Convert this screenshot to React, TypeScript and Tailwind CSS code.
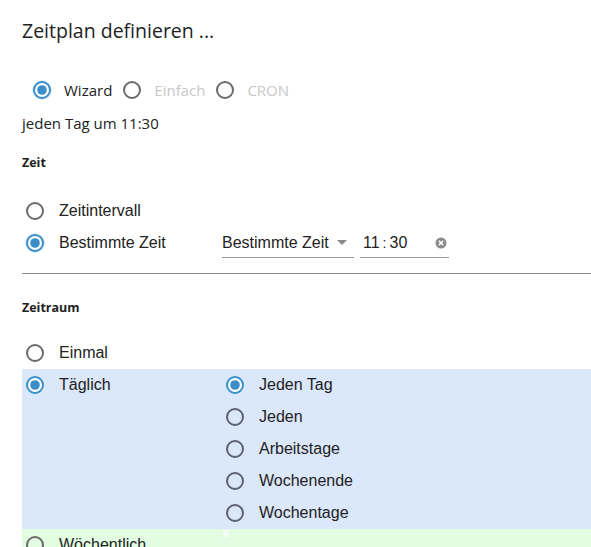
import React from "react";

function Radio({ checked, dark }: { checked?: boolean; dark?: boolean }) {
  if (checked) {
    return (
      <svg width="22" height="22" viewBox="0 0 22 22" className="shrink-0 -m-[2px]">
        <circle cx="11" cy="11" r="10" fill="#d6ecfa" />
        <circle cx="11" cy="11" r="8" fill="#ffffff" stroke="#3b8ec8" strokeWidth="2" />
        <circle cx="11" cy="11" r="4.8" fill="#3b8ec8" />
      </svg>
    );
  }
  return (
    <svg width="18" height="18" viewBox="0 0 18 18" className="shrink-0">
      <circle cx="9" cy="9" r="8" fill="none" stroke={dark ? "#5a6170" : "#6b6b6b"} strokeWidth="2" />
    </svg>
  );
}

const arial = { fontFamily: '"Liberation Sans", Arial, sans-serif' } as const;

function Row({ checked, label, dark }: { checked?: boolean; label: string; dark?: boolean }) {
  return (
    <div className="flex h-[32px] items-center gap-[15px] text-[16px] text-[#222]" style={arial}>
      <Radio checked={checked} dark={dark} />
      <span>{label}</span>
    </div>
  );
}

export default function App() {
  return (
    <div
      className="w-[591px] h-[547px] overflow-hidden bg-white text-[#222]"
      style={{ fontFamily: '"Open Sans", "Noto Sans", sans-serif' }}
    >
      <div className="pl-[22px]">
        <h1 className="pt-[17px] text-[19.5px] leading-[28px] text-[#222] font-normal">Zeitplan definieren ...</h1>

        <div className="mt-[32px] flex items-center pl-[11px] text-[15px] h-[26px]">
          <Radio checked />
          <span className="ml-[13px] mr-[11px] text-[#222]">Wizard</span>
          <Radio />
          <span className="ml-[13px] mr-[11px] text-[#c8c8c8]">Einfach</span>
          <Radio />
          <span className="ml-[13px] text-[#c8c8c8]">CRON</span>
        </div>

        <div className="mt-[10px] h-[20px] leading-[20px] text-[15px]">jeden Tag um 11:30</div>

        <div className="mt-[20px] h-[20px] leading-[20px] text-[12.5px] font-bold">Zeit</div>

        <div className="mt-[22px] pl-[4px]">
          <Row label="Zeitintervall" />
          <div className="flex items-center">
            <div className="w-[196px]">
              <Row checked label="Bestimmte Zeit" />
            </div>
            <div className="flex items-center gap-[6px] text-[16px]" style={arial}>
              <div className="w-[132px] h-[30px] border-b border-[#999] flex items-center justify-between pt-[1px]">
                <span>Bestimmte Zeit</span>
                <svg width="10" height="6" viewBox="0 0 10 6" className="mr-[7px]">
                  <path d="M0 0 L10 0 L5 5 Z" fill="#888" />
                </svg>
              </div>
              <div className="w-[89px] h-[30px] border-b border-[#999] flex items-center justify-between pl-[3px] pt-[1px]">
                <span>
                  11<span className="mx-[3px] text-[14px]">:</span>30
                </span>
                <svg width="12" height="12" viewBox="0 0 12 12" className="mr-[2px]">
                  <circle cx="6" cy="6" r="5.5" fill="#8a8a8a" />
                  <path d="M3.8 3.8 L8.2 8.2 M8.2 3.8 L3.8 8.2" stroke="#fff" strokeWidth="1.6" />
                </svg>
              </div>
            </div>
          </div>
        </div>

        <div className="mt-[14px] h-[1px] bg-[#8a8a8a]" />

        <div className="mt-[24px] h-[20px] leading-[20px] text-[12.5px] font-bold">Zeitraum</div>

        <div className="mt-[19px]">
          <div className="pl-[4px]">
            <Row label="Einmal" />
          </div>
          <div className="flex bg-[#dbe7fb] pl-[4px]">
            <div className="w-[200px]">
              <Row checked label="Täglich" />
            </div>
            <div className="flex flex-col">
              <Row checked label="Jeden Tag" />
              <Row dark label="Jeden" />
              <Row dark label="Arbeitstage" />
              <Row dark label="Wochenende" />
              <Row dark label="Wochentage" />
            </div>
          </div>
          <div className="relative bg-[#e2fde2] pl-[4px]">
            <div className="absolute left-[201px] top-[1px] w-[6px] h-[7px] bg-[#f4fff4]" />
            <Row label="Wöchentlich" />
          </div>
        </div>
      </div>
    </div>
  );
}
